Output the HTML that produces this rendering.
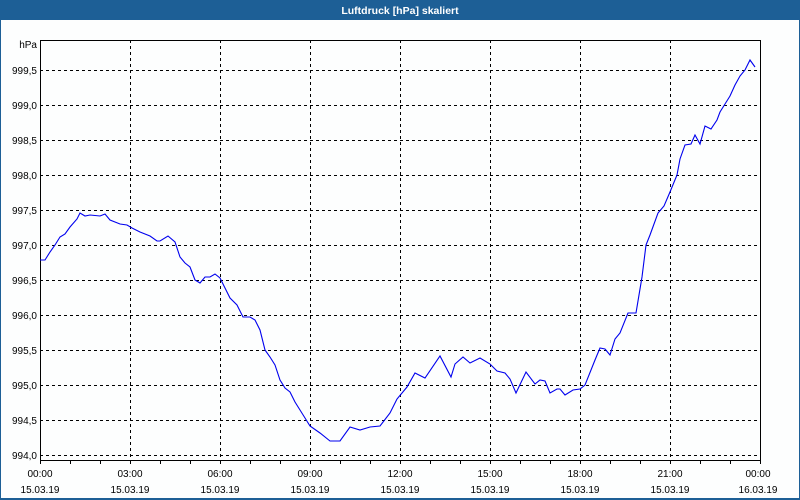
<!DOCTYPE html>
<html><head><meta charset="utf-8"><style>
html,body{margin:0;padding:0;width:800px;height:500px;overflow:hidden;background:#fff}
svg text{font-family:"Liberation Sans",sans-serif;font-size:10px;fill:#000}
</style></head><body>
<svg width="800" height="500" xmlns="http://www.w3.org/2000/svg">
<rect x="0" y="0" width="800" height="500" fill="#1d5f96"/>
<rect x="1" y="20" width="798" height="478" fill="#fdfefe"/>
<text x="400" y="14" text-anchor="middle" style="fill:#fff;font-weight:bold;font-size:10.5px">Luftdruck [hPa] skaliert</text>
<g stroke="#000" stroke-width="1" stroke-dasharray="3,3" fill="none">
<path d="M40 70.5H760M40 105.5H760M40 140.5H760M40 175.5H760M40 210.5H760M40 245.5H760M40 280.5H760M40 315.5H760M40 350.5H760M40 385.5H760M40 420.5H760M40 455.5H760"/>
<path d="M130.5 40V460M220.5 40V460M310.5 40V460M400.5 40V460M490.5 40V460M580.5 40V460M670.5 40V460"/>
</g>
<rect x="40.5" y="40.5" width="720" height="420" fill="none" stroke="#000"/>
<g stroke="#000"><path d="M70.5 460v4M100.5 460v4M130.5 460v4M160.5 460v4M190.5 460v4M220.5 460v4M250.5 460v4M280.5 460v4M310.5 460v4M340.5 460v4M370.5 460v4M400.5 460v4M430.5 460v4M460.5 460v4M490.5 460v4M520.5 460v4M550.5 460v4M580.5 460v4M610.5 460v4M640.5 460v4M670.5 460v4M700.5 460v4M730.5 460v4M760.5 460v4M40.5 460v4"/></g>
<g text-anchor="end">
<text x="37" y="48">hPa</text>
<text x="37" y="74">999,5</text><text x="37" y="109">999,0</text><text x="37" y="144">998,5</text><text x="37" y="179">998,0</text><text x="37" y="214">997,5</text><text x="37" y="249">997,0</text><text x="37" y="284">996,5</text><text x="37" y="319">996,0</text><text x="37" y="354">995,5</text><text x="37" y="389">995,0</text><text x="37" y="424">994,5</text><text x="37" y="459">994,0</text>
</g>
<g text-anchor="middle">
<text x="40" y="477">00:00</text><text x="40" y="493">15.03.19</text>
<text x="130" y="477">03:00</text><text x="130" y="493">15.03.19</text>
<text x="220" y="477">06:00</text><text x="220" y="493">15.03.19</text>
<text x="310" y="477">09:00</text><text x="310" y="493">15.03.19</text>
<text x="400" y="477">12:00</text><text x="400" y="493">15.03.19</text>
<text x="490" y="477">15:00</text><text x="490" y="493">15.03.19</text>
<text x="580" y="477">18:00</text><text x="580" y="493">15.03.19</text>
<text x="670" y="477">21:00</text><text x="670" y="493">15.03.19</text>
<text x="758" y="477">00:00</text><text x="758" y="493">16.03.19</text>
</g>
<polyline fill="none" stroke="#0000ee" stroke-width="1.1" points="40,260 45,260 50,252 55,245 60,237 65,234 70,227 77,219 80,213 85,216 90,215 100,216 105,214 110,220 120,224 127,225 132,228 140,232 150,236 157,241 160,241 168,236 175,242 180,257 185,263 190,267 195,280 200,283 205,277 210,277 215,274 220,278 225,288 230,298 237,305 243,317 250,317 255,320 260,330 265,350 270,357 275,365 280,380 285,388 290,392 295,402 300,410 305,418 310,426 320,433 330,441 340,441 350,427 360,430 370,427 380,426 390,413 397,399 407,387 415,373 425,378 440,356 451,377 455,364 463,357 470,363 480,358 490,364 497,371 505,373 510,379 516,393 526,372 535,384 540,380 545,381 550,393 557,389 560,389 565,395 573,390 580,389 585,385 595,360 600,348 605,349 610,355 615,339 620,333 628,313 636,313 642,277 646,245 650,235 658,213 664,206 670,192 677,175 680,159 685,145 691,144 695,135 700,144 705,126 711,129 717,120 720,112 725,104 730,96 735,85 740,76 745,70 750,60 755,67"/>
</svg>
</body></html>
